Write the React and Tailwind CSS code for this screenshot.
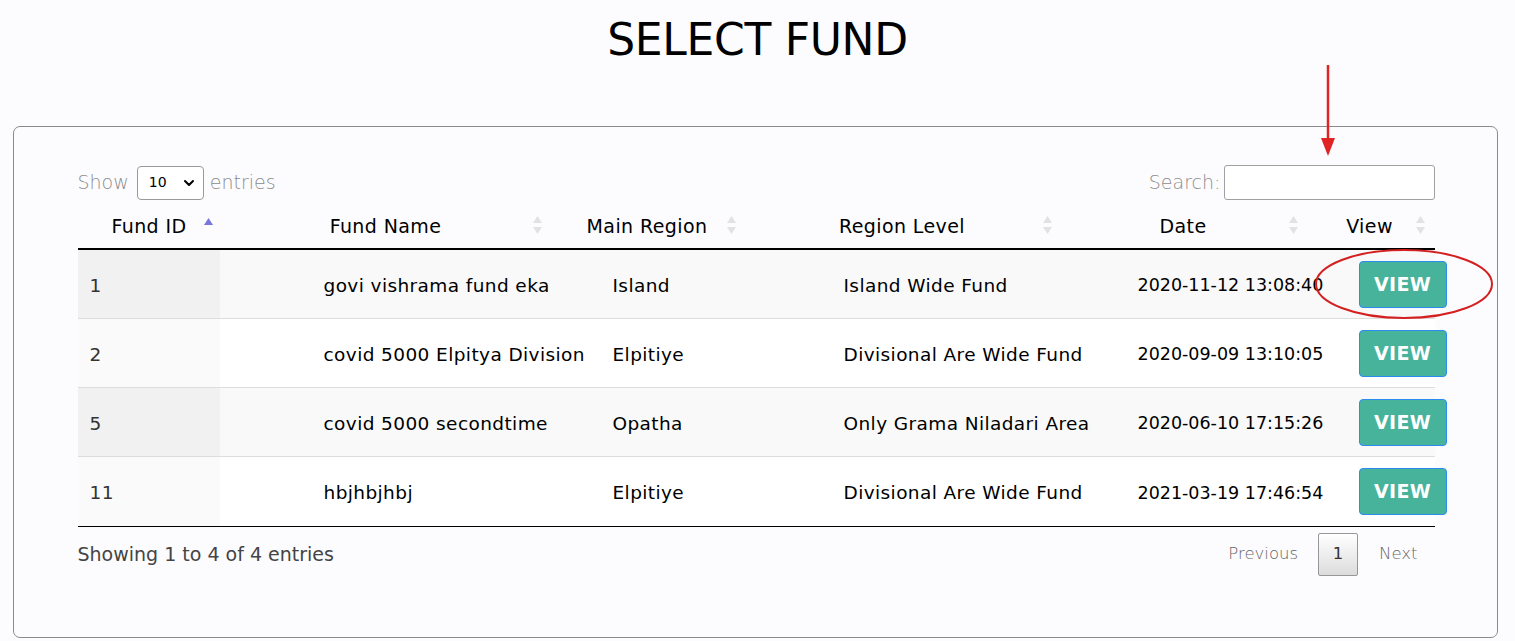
import { ChevronDown } from "lucide-react";

const rows = [
  { id: "1", name: "govi vishrama fund eka", region: "Island", level: "Island Wide Fund", date: "2020-11-12 13:08:40" },
  { id: "2", name: "covid 5000 Elpitya Division", region: "Elpitiye", level: "Divisional Are Wide Fund", date: "2020-09-09 13:10:05" },
  { id: "5", name: "covid 5000 secondtime", region: "Opatha", level: "Only Grama Niladari Area", date: "2020-06-10 17:15:26" },
  { id: "11", name: "hbjhbjhbj", region: "Elpitiye", level: "Divisional Are Wide Fund", date: "2021-03-19 17:46:54" },
];

const headers = [
  { label: "Fund ID", w: "w-[144px]", active: true },
  { label: "Fund Name", w: "w-[329px]" },
  { label: "Main Region", w: "w-[194px]" },
  { label: "Region Level", w: "w-[316px]" },
  { label: "Date", w: "w-[246px]" },
  { label: "View", w: "w-[127px]" },
];

function SortIcon({ active }) {
  if (active) {
    return (
      <svg className="absolute right-[8px] top-[12px]" width="11" height="20" viewBox="0 0 11 20">
        <path d="M5.5 1 L10 8 L1 8 Z" fill="#7777dd" />
      </svg>
    );
  }
  return (
    <svg className="absolute right-[8px] top-[10px]" width="11" height="20" viewBox="0 0 11 20">
      <path d="M5.5 1 L10 8 L1 8 Z" fill="#e2e2e2" />
      <path d="M5.5 19 L10 12 L1 12 Z" fill="#e2e2e2" />
    </svg>
  );
}

export default function App() {
  return (
    <div
      className="relative h-[641px] bg-[#fcfcfe] text-black overflow-hidden"
      style={{ fontFamily: '"DejaVu Sans", "Liberation Sans", sans-serif' }}
    >
      <h1 className="pt-[15px] text-center text-[44px] leading-[50px] font-normal tracking-[-0.3px]">
        SELECT FUND
      </h1>

      <div className="ml-[13px] mr-[17px] mt-[61px] h-[512px] rounded-[7px] border-[1.5px] border-[#8a8a8a] pl-[63.5px] pr-[62.5px] pt-[38px]">
        <div className="flex items-center justify-between text-[19px] font-light text-[#8c8c8c]">
          <div className="flex items-center">
            <span>Show</span>
            <div className="ml-[8px] mr-[6px] flex h-[34px] w-[67px] items-center justify-between rounded-[4px] border border-[#9a9a9a] bg-white pl-[11px] pr-[6px] text-[14px] font-normal text-black">
              <span>10</span>
              <ChevronDown size={16} strokeWidth={3} />
            </div>
            <span>entries</span>
          </div>
          <div className="flex items-center gap-[3px]">
            <span>Search:</span>
            <div className="h-[35px] w-[211px] rounded-[3px] border border-[#a0a0a0] bg-white" />
          </div>
        </div>

        <div className="mt-[5px] flex h-[45px] border-b-2 border-black text-[19px] tracking-[0.4px]">
          {headers.map((h) => (
            <div
              key={h.label}
              className={`relative ${h.w} flex items-center justify-center pl-[18px] pr-[19px] whitespace-nowrap`}
            >
              <span>{h.label}</span>
              <SortIcon active={h.active} />
            </div>
          ))}
        </div>

        <div className="border-b border-black">
          {rows.map((r, i) => {
            const odd = i % 2 === 0;
            return (
              <div
                key={r.id}
                className={`flex h-[69px] items-stretch text-[18.5px] tracking-[0.4px] ${
                  i < rows.length - 1 ? "border-b border-[#dddddd]" : "h-[68px]"
                } ${odd ? "bg-[#f9f9f9]" : "bg-white"}`}
              >
                <div
                  className={`flex w-[142px] items-center pl-[12px] pt-[3px] text-[#333] ${
                    odd ? "bg-[#f1f1f1]" : "bg-[#fafafa]"
                  }`}
                >
                  {r.id}
                </div>
                <div className="flex w-[383px] items-center pl-[104px] pt-[3px] whitespace-nowrap">{r.name}</div>
                <div className="flex w-[231px] items-center pl-[10px] pt-[3px] whitespace-nowrap">{r.region}</div>
                <div className="flex w-[294px] items-center pl-[10px] pt-[3px] whitespace-nowrap">{r.level}</div>
                <div className="flex w-[221px] items-center pl-[10px] pt-[3px] whitespace-nowrap text-[17.5px] tracking-[0px]">
                  {r.date}
                </div>
                <div className="flex w-[85px] items-center pl-[10px]">
                  <button className="h-[47px] w-[88px] shrink-0 rounded-[4px] border border-[#2b8cf0] bg-[#48b39b] text-[19px] font-semibold tracking-[0.3px] text-white">
                    VIEW
                  </button>
                </div>
              </div>
            );
          })}
        </div>

        <div className="mt-[6px] flex items-center justify-between">
          <span className="text-[19px] text-[#444]">Showing 1 to 4 of 4 entries</span>
          <div className="flex items-center text-[16.5px] font-light text-[#666]">
            <span className="pr-[20px]">Previous</span>
            <span className="flex h-[43px] w-[40px] items-center justify-center rounded-[2px] border border-[#979797] bg-gradient-to-b from-white to-[#dcdcdc] font-normal text-[#333]">
              1
            </span>
            <span className="pl-[21px] pr-[17px]">Next</span>
          </div>
        </div>
      </div>

      <svg className="absolute left-0 top-0 pointer-events-none" width="1515" height="641">
        <line x1="1328" y1="65" x2="1328" y2="142" stroke="#e02424" strokeWidth="2.5" />
        <path d="M1321 138 L1335 138 L1328 156 Z" fill="#e02424" />
        <ellipse cx="1404" cy="284" rx="88" ry="34" fill="none" stroke="#d42020" strokeWidth="2" />
      </svg>
    </div>
  );
}
